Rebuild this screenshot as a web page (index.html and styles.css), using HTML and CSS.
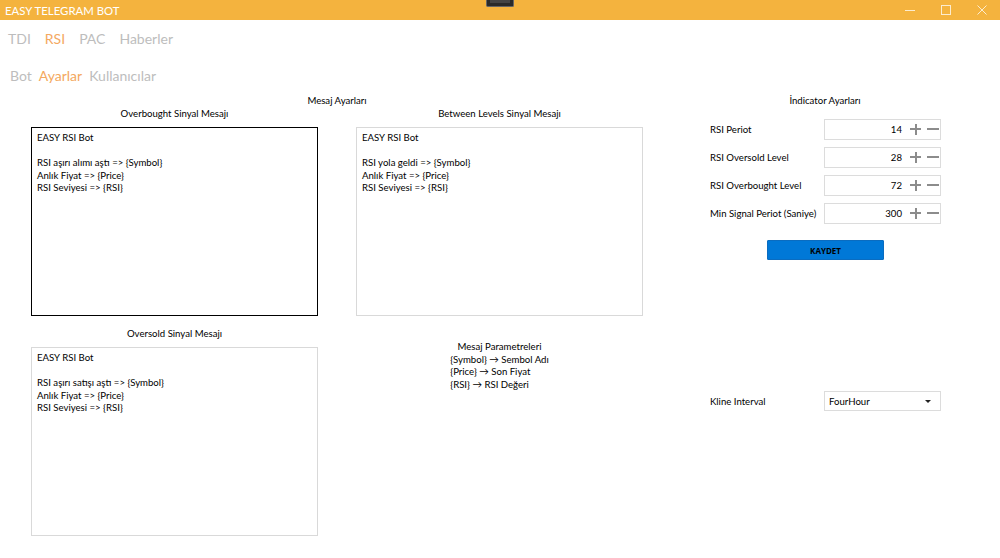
FILE: index.html
```html
<!DOCTYPE html>
<html lang="tr">
<head>
<meta charset="utf-8">
<title>EASY TELEGRAM BOT</title>
<link rel="stylesheet" href="styles.css">
</head>
<body>
<div class="window">
  <header class="titlebar">
    <span class="title">EASY TELEGRAM BOT</span>
    <span class="grip"><span class="grip-inner"></span></span>
    <div class="controls">
      <span class="ctl"><svg width="12" height="12" viewBox="0 0 12 12"><path d="M1 6.5H11" stroke="#fff" stroke-opacity=".75" stroke-width="1"/></svg></span>
      <span class="ctl"><svg width="12" height="12" viewBox="0 0 12 12"><rect x="1.5" y="1.5" width="9" height="9" fill="none" stroke="#fff" stroke-opacity=".75" stroke-width="1"/></svg></span>
      <span class="ctl"><svg width="12" height="12" viewBox="0 0 12 12"><path d="M1.5 1.5L10.5 10.5M10.5 1.5L1.5 10.5" stroke="#fff" stroke-opacity=".75" stroke-width="1"/></svg></span>
    </div>
  </header>

  <nav class="tabs main-tabs">
    <span class="tab">TDI</span>
    <span class="tab active">RSI</span>
    <span class="tab">PAC</span>
    <span class="tab">Haberler</span>
  </nav>
  <nav class="tabs sub-tabs">
    <span class="tab">Bot</span>
    <span class="tab active">Ayarlar</span>
    <span class="tab">Kullanıcılar</span>
  </nav>

  <main class="content">
    <section class="messages">
      <div class="section-title">Mesaj Ayarları</div>
      <div class="msg-grid">
        <div class="msg-col">
          <div class="msg-label">Overbought Sinyal Mesajı</div>
          <div class="textbox focused">EASY RSI Bot<br><br>RSI aşırı alımı aştı =&gt; {Symbol}<br>Anlık Fiyat =&gt; {Price}<br>RSI Seviyesi =&gt; {RSI}</div>
        </div>
        <div class="msg-col">
          <div class="msg-label">Between Levels Sinyal Mesajı</div>
          <div class="textbox">EASY RSI Bot<br><br>RSI yola geldi =&gt; {Symbol}<br>Anlık Fiyat =&gt; {Price}<br>RSI Seviyesi =&gt; {RSI}</div>
        </div>
        <div class="msg-col">
          <div class="msg-label">Oversold Sinyal Mesajı</div>
          <div class="textbox">EASY RSI Bot<br><br>RSI aşırı satışı aştı =&gt; {Symbol}<br>Anlık Fiyat =&gt; {Price}<br>RSI Seviyesi =&gt; {RSI}</div>
        </div>
        <div class="msg-col params-col">
          <div class="params">
            <div class="params-title">Mesaj Parametreleri</div>
            <div>{Symbol} → Sembol Adı</div>
            <div>{Price} → Son Fiyat</div>
            <div>{RSI} → RSI Değeri</div>
          </div>
        </div>
      </div>
    </section>

    <section class="indicator">
      <div class="ind-title">İndicator Ayarları</div>
      <div class="ind-row">
        <span class="ind-label">RSI Periot</span>
        <div class="num"><span class="val">14</span><span class="pm plus"></span><span class="pm minus"></span></div>
      </div>
      <div class="ind-row">
        <span class="ind-label">RSI Oversold Level</span>
        <div class="num"><span class="val">28</span><span class="pm plus"></span><span class="pm minus"></span></div>
      </div>
      <div class="ind-row">
        <span class="ind-label">RSI Overbought Level</span>
        <div class="num"><span class="val">72</span><span class="pm plus"></span><span class="pm minus"></span></div>
      </div>
      <div class="ind-row">
        <span class="ind-label">Min Signal Periot (Saniye)</span>
        <div class="num"><span class="val">300</span><span class="pm plus"></span><span class="pm minus"></span></div>
      </div>
      <div class="btn-row"><button class="save">KAYDET</button></div>
      <div class="ind-row kline">
        <span class="ind-label">Kline Interval</span>
        <div class="combo"><span>FourHour</span><svg width="8" height="5" viewBox="0 0 8 5"><path d="M1 1L4 4L7 1Z" fill="#222"/></svg></div>
      </div>
    </section>
  </main>
</div>
</body>
</html>
```

FILE: styles.css
```css
* { box-sizing: border-box; }
html, body { margin: 0; padding: 0; background: #fff; }
body {
  font-family: Lato, "Open Sans", sans-serif;
  font-size: 9.6px;
  color: #000;
  width: 1000px;
  height: 558px;
  overflow: hidden;
}
.titlebar {
  height: 20px;
  background: #F4B33E;
  display: flex;
  align-items: center;
  position: relative;
  padding-left: 5px;
}
.title {
  color: #fff;
  font-size: 11.4px;
}
.grip {
  position: absolute;
  left: 486px;
  top: 0;
  width: 28px;
  height: 7px;
  background: #2a2a2a;
  border: 1px solid #666;
  border-top: none;
  border-radius: 0 0 2px 2px;
  padding: 0 3px 2px;
}
.grip-inner { display: block; height: 3px; background: #444; }
.controls {
  margin-left: auto;
  display: flex;
  height: 20px;
}
.ctl {
  width: 36px;
  display: flex;
  align-items: center;
  justify-content: center;
}
.tabs {
  display: flex;
  align-items: center;
  color: #bdbdbd;
}
.main-tabs {
  height: 37px;
  padding-left: 8px;
  gap: 14px;
  font-size: 14px;
}
.sub-tabs {
  height: 36px;
  padding-left: 10px;
  gap: 7px;
  font-size: 14px;
}
.tab.active { color: #F4A860; }
.content {
  display: flex;
  padding-top: 1px;
}
.messages { width: 680px; }
.section-title {
  text-align: center;
  height: 13px;
  line-height: 13px;
  width: 674px;
}
.msg-grid {
  display: grid;
  grid-template-columns: 287px 287px;
  column-gap: 38px;
  row-gap: 11px;
  padding-left: 31px;
}
.msg-label {
  text-align: center;
  height: 14px;
  line-height: 14px;
  margin-bottom: 6px;
}
.textbox {
  height: 189px;
  border: 1px solid #d9d9d9;
  padding: 4px 5px;
  line-height: 12.5px;
}
.textbox.focused { border-color: #000; }
.params-col {
  display: flex;
  justify-content: center;
  padding-top: 14px;
}
.params { line-height: 12.5px; }
.params-title { text-align: center; }
.indicator {
  width: 250px;
  margin-left: 30px;
}
.ind-title {
  text-align: center;
  height: 13px;
  line-height: 13px;
  margin-bottom: 8px;
  width: 230px;
}
.ind-row {
  display: flex;
  align-items: center;
  height: 28px;
}
.ind-label { width: 114px; white-space: nowrap; }
.num, .combo {
  width: 117px;
  height: 21px;
  border: 1px solid #dcdcdc;
  display: flex;
  align-items: center;
}
.num { justify-content: flex-end; padding-right: 0; }
.val { margin-right: 2px; }
.pm {
  width: 18px;
  height: 17px;
  position: relative;
}
.pm::before, .pm::after {
  content: "";
  position: absolute;
  background: #8c8c8c;
}
.plus::before {
  left: 6px;
  width: 11px;
  top: 7.5px;
  height: 2px;
}
.plus::after {
  left: 10.5px;
  width: 2px;
  top: 3px;
  height: 11px;
}
.minus::before {
  left: 5px;
  width: 12px;
  top: 7.5px;
  height: 2px;
}
.minus::after { display: none; }
.btn-row {
  padding-left: 57px;
  padding-top: 13px;
  height: 164px;
}
.save {
  display: block;
  width: 117px;
  height: 20px;
  background: #0078D7;
  border: 1px solid #0a6cc0;
  border-radius: 1px;
  color: #000;
  font-family: "Open Sans", sans-serif;
  font-weight: 700;
  font-size: 8px;
  padding: 0;
}
.kline { height: 20px; }
.combo {
  height: 20px;
  justify-content: space-between;
  padding: 0 8px 0 4px;
}
```
